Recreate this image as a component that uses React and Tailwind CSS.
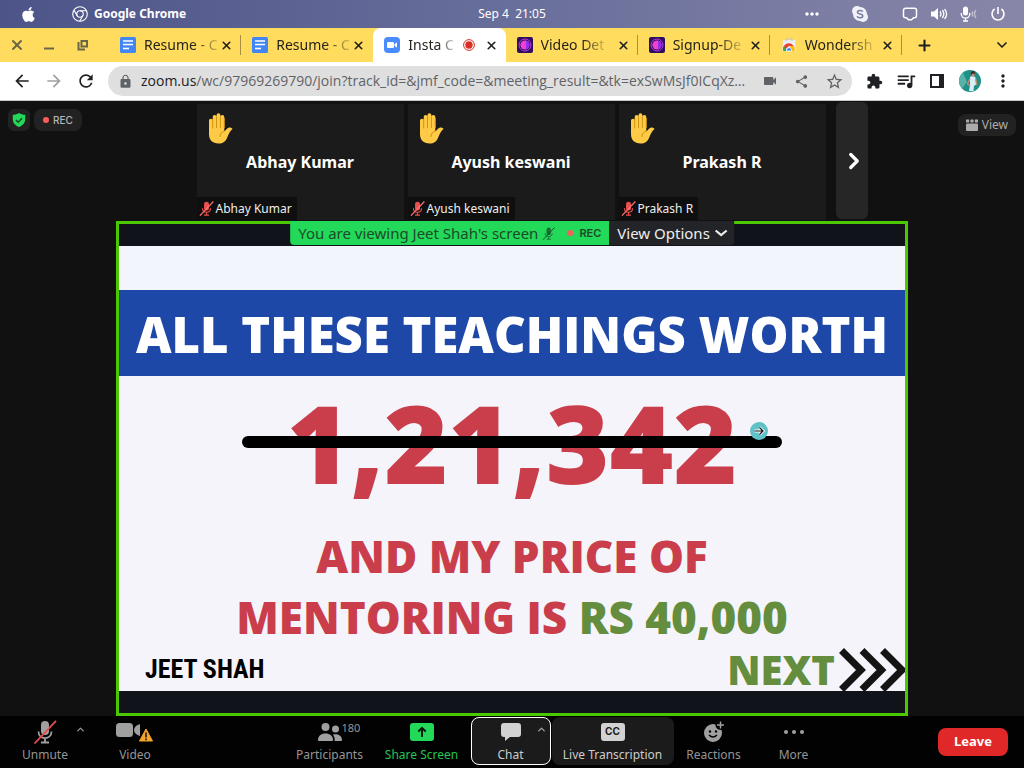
import React from "react";
import { X, Plus, ChevronDown, ChevronUp, ChevronRight } from "lucide-react";
import { FaApple } from "react-icons/fa";
import {
  MdArrowBack,
  MdArrowForward,
  MdRefresh,
  MdLock,
  MdVideocam,
  MdShare,
  MdStarBorder,
  MdExtension,
  MdQueueMusic,
  MdMoreVert,
  MdMoreHoriz,
} from "react-icons/md";

function ChromeMark() {
  return (
    <svg viewBox="0 0 16 16" className="size-4" fill="none" stroke="#fff" strokeWidth="1.1">
      <circle cx="8" cy="8" r="7.3" />
      <circle cx="8" cy="8" r="3.2" />
      <path d="M8 4.8h6.4M5.2 9.6L2 4.2M10.8 9.6L7.7 15.2" />
    </svg>
  );
}

function DocsIcon() {
  return (
    <svg viewBox="0 0 16 16" className="size-4 shrink-0">
      <rect width="16" height="16" rx="1.5" fill="#4285f4" />
      <path d="M3 4h10M3 7.5h10" stroke="#fff" strokeWidth="1.6" />
      <path d="M3 11.5h6" stroke="#fff" strokeWidth="1.6" />
    </svg>
  );
}

function ZoomIcon() {
  return (
    <svg viewBox="0 0 16 16" className="size-4 shrink-0">
      <rect width="16" height="16" rx="4" fill="#4a8cff" />
      <rect x="3" y="5" width="7" height="6" rx="1.3" fill="#fff" />
      <path d="M10.5 7.2L13 5.3v5.4l-2.5-1.9z" fill="#fff" />
    </svg>
  );
}

function RecorderIcon() {
  return (
    <svg viewBox="0 0 16 16" className="size-4 shrink-0">
      <rect width="16" height="16" rx="2" fill="#2c0f5e" />
      <circle cx="8" cy="8" r="6" fill="none" stroke="#c23ad8" strokeWidth="1" />
      <circle cx="8" cy="8" r="4.6" fill="#f23fd0" />
      <path d="M9 3.6a4.6 4.6 0 0 1 0 8.8z" fill="#8f2df0" />
    </svg>
  );
}

function StoreIcon() {
  return (
    <svg viewBox="0 0 16 16" className="size-4 shrink-0">
      <path d="M2 3h12l.7 11H1.3z" fill="#eceef1" />
      <path d="M5 4V2h6v2" fill="none" stroke="#c3c6cc" strokeWidth="1.2" />
      <path d="M2.4 14a5.800 5.800 0 0 1 .9-5.500A5.800 5.800 0 0 1 12.700 9H8z" fill="#ea4335" />
      <path d="M2.400 14a5.800 5.800 0 0 1 .5-4.900L6 14z" fill="#34a853" />
      <path d="M10 14h3.600a5.800 5.800 0 0 0-.7-5H9z" fill="#fbbc04" />
      <path d="M5.500 14a2.600 2.600 0 1 1 5 0z" fill="#4285f4" stroke="#fff" strokeWidth=".8" />
    </svg>
  );
}

const tabs = [
  { title: "Resume - C", icon: <DocsIcon />, divider: true },
  { title: "Resume - C", icon: <DocsIcon /> },
  { title: "Insta C", icon: <ZoomIcon />, active: true },
  { title: "Video Det", icon: <RecorderIcon />, divider: true },
  { title: "Signup-De", icon: <RecorderIcon />, divider: true },
  { title: "Wondersh", icon: <StoreIcon />, divider: true },
];

function Tab({ title, icon, active, divider }) {
  return (
    <div
      className={
        "relative flex min-w-0 flex-1 items-center pl-[11px] pr-2 " +
        (active ? "rounded-t-lg bg-white" : "")
      }
    >
      {icon}
      <span className="ml-2 min-w-0 flex-1 overflow-hidden whitespace-nowrap text-sm text-[#24231c]">
        <span className="[mask-image:linear-gradient(to_right,#000_65%,#0003)]">{title}</span>
      </span>
      {active && (
        <svg viewBox="0 0 12 12" className="mr-2.5 size-3 shrink-0">
          <circle cx="6" cy="6" r="5.4" fill="none" stroke="#d93025" strokeWidth="1" />
          <circle cx="6" cy="6" r="3.7" fill="#d93025" />
        </svg>
      )}
      <button aria-label={"Close " + title} className="grid h-4 w-[13px] shrink-0 place-items-center text-[#1f1f1f]">
        <X size={13} strokeWidth={3} />
      </button>
      {divider && <span className="absolute right-0 top-[7px] h-5 w-px bg-[#a78f3e]" />}
    </div>
  );
}

function MenuBar() {
  return (
    <header className="grid h-7 grid-cols-3 items-center bg-linear-to-r from-[#4d5488] via-[#686f9b] to-[#8886a8] px-4 text-[13px] text-white">
      <div className="flex items-center pl-1">
        <FaApple size={17} className="mr-[35px]" />
        <ChromeMark />
        <span className="ml-1.5 text-xs font-bold">Google Chrome</span>
      </div>
      <div className="whitespace-pre text-center text-xs">Sep 4  21:05</div>
      <div className="flex items-center justify-end pr-0.5">
        <MdMoreHoriz size={20} className="mr-[30px]" />
        <svg viewBox="0 0 16 16" className="mr-[34px] size-4">
          <circle cx="5" cy="5" r="5" fill="#f1f2f8" />
          <circle cx="11" cy="11" r="5" fill="#f1f2f8" />
          <circle cx="8" cy="8" r="7" fill="#f1f2f8" />
          <path d="M10.8 5.6C10 4 5.4 3.8 5.4 6.2c0 2.3 5.4 1.3 5.4 3.7 0 2.4-5 2.3-5.7.4" fill="none" stroke="#777da4" strokeWidth="1.5" />
        </svg>
        <svg viewBox="0 0 16 16" className="mr-3 size-4" fill="none" stroke="#fff" strokeWidth="1.5">
          <path d="M3.5 2.3h9a2 2 0 0 1 2 2v5.4a2 2 0 0 1-2 2h-1l-2 2h-3l-2-2h-1a2 2 0 0 1-2-2V4.3a2 2 0 0 1 2-2z" />
        </svg>
        <svg viewBox="0 0 18 16" className="mr-3 h-4 w-[18px]" fill="none" stroke="#fff" strokeWidth="1.3">
          <path d="M1 5.5h3L8 2v12l-4-3.500H1z" fill="#fff" stroke="none" />
          <path d="M10 5.5q2 2.500 0 5M12.3 4q3 4 0 8M14.6 3q4 5 0 10" />
        </svg>
        <svg viewBox="0 0 18 16" className="mr-3 h-4 w-[18px]" fill="none" stroke="#fff" strokeWidth="1.3">
          <rect x="3" y="0.5" width="5" height="9" rx="2.5" fill="#fff" stroke="none" />
          <path d="M1.3 7v1a4.2 4.2 0 0 0 8.400 0V7M5.5 12.2V15M3 15h5" />
          <path d="M13 5.5q-2 2.500 0 5M16 4q-3 4 0 8" opacity=".5" />
        </svg>
        <svg viewBox="0 0 16 16" className="size-4" fill="none" stroke="#fff" strokeWidth="1.6">
          <path d="M8 1v7M4.6 3a6 6 0 1 0 6.800 0" />
        </svg>
      </div>
    </header>
  );
}

function TabStrip() {
  return (
    <div className="flex h-[34px] bg-[#ffdc5d]">
      <div className="flex w-[109px] shrink-0 items-center gap-[18px] pl-[9px] text-[#6c6648]">
        <button aria-label="Close window"><X size={16} strokeWidth={3} /></button>
        <button aria-label="Minimize">
          <svg viewBox="0 0 12 12" className="size-3"><path d="M1 9.5h10" stroke="currentColor" strokeWidth="2" /></svg>
        </button>
        <button aria-label="Restore" className="pl-1">
          <svg viewBox="0 0 12 12" className="size-3" fill="none" stroke="currentColor" strokeWidth="2">
            <path d="M4.5 2h5.500v5.500H4.5zM1.5 3v7.500H8" />
          </svg>
        </button>
      </div>
      <div className="flex min-w-0 flex-1">
        {tabs.map((t, i) => (
          <Tab key={i} {...t} />
        ))}
      </div>
      <div className="flex w-[122px] shrink-0 items-center justify-between px-3.5 text-[#1f1f1f]">
        <button aria-label="New tab"><Plus size={17} strokeWidth={3} /></button>
        <button aria-label="Search tabs"><ChevronDown size={16} strokeWidth={2.5} /></button>
      </div>
    </div>
  );
}

function Toolbar() {
  return (
    <div className="flex h-[39px] items-center border-b border-[#c9c9c9] bg-white pl-3 pr-[11px] text-[#202124]">
      <div className="flex shrink-0 items-center gap-3">
        <button aria-label="Back"><MdArrowBack size={20} /></button>
        <button aria-label="Forward" className="text-[#a0a0a0]"><MdArrowForward size={20} /></button>
        <button aria-label="Reload"><MdRefresh size={20} /></button>
      </div>
      <div className="ml-3 flex h-[30px] min-w-0 flex-1 items-center rounded-full bg-[#dfdfdf] pl-2.5 pr-2 text-[#5f6368]">
        <MdLock size={15} className="mr-2 shrink-0" />
        <div className="min-w-0 flex-1 truncate text-sm font-['Open_Sans',sans-serif]">
          <span className="text-[#202124]">zoom.us</span>
          /wc/97969269790/join?track_id=&amp;jmf_code=&amp;meeting_result=&amp;tk=exSwMsJf0ICqXz…
        </div>
        <div className="flex shrink-0 items-center gap-4 pl-2">
          <button aria-label="Camera"><MdVideocam size={16} /></button>
          <button aria-label="Share page"><MdShare size={15} /></button>
          <button aria-label="Bookmark"><MdStarBorder size={19} /></button>
        </div>
      </div>
      <div className="ml-3.5 flex shrink-0 items-center">
        <button aria-label="Extensions"><MdExtension size={17} /></button>
        <button aria-label="Media" className="ml-3"><MdQueueMusic size={22} /></button>
        <button aria-label="Side panel" className="ml-3">
          <svg viewBox="0 0 16 16" className="size-4">
            <path d="M1 1h14v14H1zM3 3v10h7V3z" fill="currentColor" fillRule="evenodd" />
          </svg>
        </button>
        <button aria-label="Profile" className="ml-3.5">
          <svg viewBox="0 0 22 22" className="size-[22px]">
            <circle cx="11" cy="11" r="11" fill="#1f8f88" />
            <path d="M4 2.5A11 11 0 0 0 3 18.5L8 12z" fill="#57b3a8" />
            <path d="M11 7l3-1.500 2.500 2 .5 7-2 1.500-.5 5h-4.500L11 15z" fill="#d9eef8" />
            <circle cx="14" cy="3.300" r="2.200" fill="#3c2b26" />
            <path d="M12.800 3.800h2.800v2l-1.400 1.500-1.400-1.500z" fill="#c58d6c" />
            <path d="M11 8.500L8.500 14l2.500 2M16.800 9l1 6" stroke="#c58d6c" strokeWidth="1.3" fill="none" />
          </svg>
        </button>
        <button aria-label="Menu" className="ml-3"><MdMoreVert size={20} /></button>
      </div>
    </div>
  );
}

function Hand() {
  return (
    <svg viewBox="0 0 25 31" className="h-[31px] w-[25px]">
      <path
        d="M1 7.5a1.8 1.8 0 0 1 3.700 0V4a1.9 1.9 0 0 1 3.800 0V2.300a1.9 1.9 0 0 1 3.900 0V4a1.9 1.9 0 0 1 3.900 0v14.500l3.200-3.200c1.600-1.300 4-.8 5 .7-1.800 1-3.500 4.300-5.300 8.500C17.5 28.5 15 30.5 10.5 30.5 4.5 30.5 1 27 1 21z"
        fill="#ffcb46"
      />
      <path d="M4.700 6v9.500M8.500 4v11M12.400 4v11M16.300 5v10M16.300 18c-2.800.8-4.500 3-4.300 6" fill="none" stroke="#cf9410" strokeWidth="1" />
    </svg>
  );
}

function MicOff({ className, slash }) {
  return (
    <svg viewBox="0 0 24 24" className={className} fill="none" stroke="currentColor" strokeWidth="1.8">
      <rect x="8" y="1" width="8" height="14" rx="4" fill="currentColor" stroke="none" />
      <path d="M5.5 11.5c0 8.700 13 8.700 13 0M12 18v4M8 22.5h8" />
      <path d="M1.5 23.5L23 .8" stroke={slash} strokeWidth="1.8" />
    </svg>
  );
}

function Participant({ name }) {
  return (
    <article className="relative grid h-[116px] w-[207px] place-items-center bg-[#1b1b1b]">
      <span className="absolute left-[11px] top-[9px]"><Hand /></span>
      <h2 className="text-base font-bold text-white">{name}</h2>
      <div className="absolute bottom-0 left-0 flex h-[23px] items-center gap-0.5 bg-[#0f0f0f] pl-0.5 pr-[5px] text-xs text-[#eeeeee]">
        <MicOff className="size-[15px] text-[#e8504f]" slash="#ff7472" />
        {name}
      </div>
    </article>
  );
}

function TopRow() {
  return (
    <div className="flex items-start pb-px">
      <div className="flex flex-1 gap-1 pl-2 pt-2">
        <button aria-label="Security" className="grid size-[22px] place-items-center rounded-md bg-[#222222]">
          <svg viewBox="0 0 14 14" className="size-[14px]">
            <path d="M7 0c1.8 1.2 3.5 1.7 6.200 1.800V6c0 4-2.500 6.500-6.200 8C3.300 12.5.8 10 .8 6V1.800C3.5 1.700 5.200 1.200 7 0z" fill="#23d959" />
            <path d="M4 7l2.200 2.200L10 5.300" fill="none" stroke="#17451f" strokeWidth="1.5" />
          </svg>
        </button>
        <div className="flex h-[22px] items-center gap-1 rounded-lg bg-[#222222] px-[9px] text-[10px] font-medium text-[#b5b5b5] font-['Inter',sans-serif]">
          <span className="size-1.5 rounded-full bg-[#ff5c5c]" />
          REC
        </div>
      </div>
      <div className="flex gap-2.5 pl-10">
        <div className="flex gap-1 pt-[3px]">
          <Participant name="Abhay Kumar" />
          <Participant name="Ayush keswani" />
          <Participant name="Prakash R" />
        </div>
        <button aria-label="Next participants" className="mt-px grid h-[117px] w-8 place-items-center rounded-md bg-[#262626] pl-1 text-white">
          <ChevronRight size={26} strokeWidth={3} />
        </button>
      </div>
      <div className="flex flex-1 justify-end pr-2 pt-[13px]">
        <button className="flex h-[22px] items-center gap-1 rounded-lg bg-[#222222] px-2 text-xs text-[#acacac]">
          <svg viewBox="0 0 12 12" className="size-3" fill="currentColor">
            <rect x="0" y="4.5" width="12" height="7.5" rx="1" />
            <rect x="0" y="0.5" width="3.2" height="3" rx=".6" />
            <rect x="4.4" y="0.5" width="3.2" height="3" rx=".6" />
            <rect x="8.8" y="0.5" width="3.2" height="3" rx=".6" />
          </svg>
          View
        </button>
      </div>
    </div>
  );
}

function SharedScreen() {
  return (
    <section className="relative mx-auto w-full max-w-[792px] border-[3px] border-[#4bc800] bg-[#11131b] py-[22px]">
      <div className="absolute -top-[3px] left-1/2 flex h-6 -translate-x-1/2 whitespace-nowrap text-[15px]">
        <div className="flex items-center rounded-bl bg-[#23d959] px-2 text-[#1c4a2a]">
          You are viewing Jeet Shah's screen
          <MicOff className="ml-1 size-[13px] text-[#1c6e35]" slash="#134a24" />
          <span className="ml-3 size-1.5 rounded-full bg-[#f65e5e]" />
          <span className="ml-1.5 text-[11px] font-semibold font-['Inter',sans-serif]">REC</span>
        </div>
        <button className="flex items-center gap-1 rounded-br bg-[#232427] pl-2 pr-1.5 text-[#eeeeee]">
          View Options
          <svg viewBox="0 0 14 14" className="size-3.5" fill="none" stroke="currentColor" strokeWidth="2.2">
            <path d="M1.500 4.500L7 9l5.500-4.500" />
          </svg>
        </button>
      </div>
      <div className="bg-[#f4f4fa] font-extrabold font-['Open_Sans',sans-serif]">
        <div className="h-11 bg-[#f2f5fb]" />
        <h1 className="bg-[#1e48a8] pt-0.5 text-center text-[49px] leading-[84px] whitespace-nowrap text-white">
          ALL THESE TEACHINGS WORTH
        </h1>
        <div className="relative mx-auto w-[540px] pt-px text-center text-[109px] leading-[130px] text-[#ca3e4b]">
          1,21,342
          <span className="absolute inset-x-0 top-[60px] h-3 rounded-full bg-black" />
          <svg viewBox="0 0 18 18" className="absolute right-3.5 top-[46px] size-[18px]">
            <circle cx="9" cy="9" r="9" fill="#5fc2c8" />
            <path d="M4.5 9h8M9.5 5.500L13 9l-3.500 3.500" fill="none" stroke="#fff" strokeWidth="3" />
            <path d="M4.5 9h8M9.5 5.500L13 9l-3.500 3.500" fill="none" stroke="#111" strokeWidth="1.2" />
          </svg>
        </div>
        <p className="pt-[19px] text-center text-[44px] leading-[61px] text-[#ca3e4b]">
          AND MY PRICE OF
          <br />
          MENTORING IS <span className="text-[#648d3e]">RS 40,000</span>
        </p>
        <div className="flex h-[43px] items-center justify-between pl-[26px]">
          <span className="text-[26px] font-bold text-black font-['Liberation_Sans_Narrow','Roboto_Condensed',sans-serif]">
            JEET SHAH
          </span>
          <span className="flex items-center gap-1 text-[40px] leading-[42px] text-[#648d3e]">
            NEXT
            <svg viewBox="0 0 66 44" className="h-11 w-[66px]" fill="none" stroke="#141414" strokeWidth="7">
              <path d="M2.5 2.5L22 22 2.5 41.5M23 2.5L42.5 22 23 41.5M43.5 2.5L63 22 43.5 41.5" />
            </svg>
          </span>
        </div>
      </div>
    </section>
  );
}

function Control({ label, className, children }) {
  return (
    <button className={"relative flex h-12 flex-col items-center text-xs " + className}>
      <span className="flex h-[30px] items-center justify-center">{children}</span>
      <span className="leading-4 whitespace-nowrap">{label}</span>
    </button>
  );
}

function Controls() {
  return (
    <footer className="flex h-[52px] items-start justify-between bg-[#020202] pt-px pr-4 text-[#959595]">
      <div className="flex pr-0.5">
        <Control label="Unmute" className="w-[90px]">
          <MicOff className="size-6 text-[#a0a0a0]" slash="#e84b4b" />
          <ChevronUp size={11} strokeWidth={3} className="absolute right-1 top-[7px]" />
        </Control>
        <Control label="Video" className="w-[90px]">
          <svg viewBox="0 0 38 20" className="h-5 w-[38px]">
            <rect x="0" y="1" width="17" height="14" rx="3.5" fill="#a0a0a0" />
            <path d="M24 2v12q-6-2-6-6t6-6z" fill="#a0a0a0" />
            <path d="M30 7l6.500 12H23.500z" fill="#f5a42b" stroke="#f5a42b" strokeWidth="1" strokeLinejoin="round" />
            <path d="M30 10.500v5M30 16.500v1.800" stroke="#1b1b1b" strokeWidth="1.6" />
          </svg>
        </Control>
      </div>
      <div className="flex">
        <Control label="Participants" className="w-[86px]">
          <svg viewBox="0 0 24 18" className="h-[18px] w-6" fill="#a0a0a0">
            <circle cx="7.5" cy="4" r="4" />
            <path d="M0 17c0-4 3-6.500 7.500-6.500S15 13 15 17q0 1-1 1H1q-1 0-1-1z" />
            <circle cx="17.5" cy="6" r="3.500" />
            <path d="M16.500 18q.8-3.500-1.500-6.500c4.500-1 9 1 9 5.500q0 1-1 1z" />
          </svg>
          <span className="absolute left-[55px] top-[3px] text-[11px] leading-4">180</span>
        </Control>
        <Control label="Share Screen" className="w-[98px] text-[#23c453]">
          <svg viewBox="0 0 24 18" className="h-[18px] w-6">
            <rect width="24" height="18" rx="3" fill="#23d959" />
            <path d="M12 14V5M8.3 8.500L12 4.800l3.700 3.700" fill="none" stroke="#0b1a0f" strokeWidth="2" />
          </svg>
        </Control>
        <Control label="Chat" className="mr-px w-20 rounded-lg bg-[#1b1b1b] text-[#cccccc] outline outline-1 -outline-offset-1 outline-white">
          <svg viewBox="0 0 20 18" className="h-[18px] w-5" fill="#d2d2d2">
            <path d="M3 0h14a3 3 0 0 1 3 3v8a3 3 0 0 1-3 3H9l-5 4v-4H3a3 3 0 0 1-3-3V3a3 3 0 0 1 3-3z" />
          </svg>
          <ChevronUp size={11} strokeWidth={3} className="absolute right-1 top-[7px] text-[#a0a0a0]" />
        </Control>
        <Control label="Live Transcription" className="w-[122px] rounded-lg bg-[#1b1b1b] text-[#cccccc]">
          <span className="grid h-[18px] w-6 place-items-center rounded-[3px] bg-[#d2d2d2] text-[10px] font-bold text-[#1b1b1b] font-['Inter',sans-serif]">
            CC
          </span>
        </Control>
        <Control label="Reactions" className="w-20">
          <svg viewBox="0 0 22 22" className="size-[22px]">
            <circle cx="10" cy="12" r="9" fill="#a0a0a0" />
            <circle cx="17.5" cy="4" r="5" fill="#020202" />
            <path d="M17.5.5v7M14 4h7" stroke="#a0a0a0" strokeWidth="1.5" />
            <circle cx="7" cy="10.5" r="1.2" fill="#020202" />
            <circle cx="13" cy="10.5" r="1.2" fill="#020202" />
            <path d="M6 14q4 4 8 0" fill="none" stroke="#020202" strokeWidth="1.4" />
          </svg>
        </Control>
        <Control label="More" className="w-20">
          <svg viewBox="0 0 20 4" className="h-1 w-5" fill="#a0a0a0">
            <circle cx="2" cy="2" r="2" />
            <circle cx="10" cy="2" r="2" />
            <circle cx="18" cy="2" r="2" />
          </svg>
        </Control>
      </div>
      <button className="mt-[11px] h-7 w-[70px] rounded-lg bg-[#e02828] text-[13px] font-bold text-white">Leave</button>
    </footer>
  );
}

export default function App() {
  return (
    <div className="flex min-h-screen flex-col bg-[#111111] font-['Noto_Sans',sans-serif]">
      <MenuBar />
      <TabStrip />
      <Toolbar />
      <main className="flex-1">
        <TopRow />
        <SharedScreen />
      </main>
      <Controls />
    </div>
  );
}
